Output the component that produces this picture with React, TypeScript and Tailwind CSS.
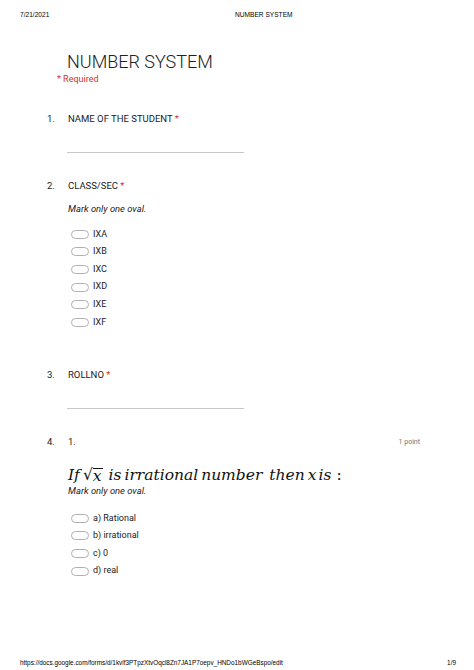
import React from "react";

const classOptions = ["IXA", "IXB", "IXC", "IXD", "IXE", "IXF"];
const answerOptions = ["a) Rational", "b) irrational", "c) 0", "d) real"];

const Star = () => <span className="text-[#d93025]"> *</span>;

const Oval = () => (
    <span className="inline-block w-[18px] h-[9px] rounded-full border border-[#b0b0b0] mr-[4px]" />
);

const OptionList = ({ items, className }: { items: string[]; className: string }) => (
    <div className={className}>
        {items.map((item) => (
            <div key={item} className="h-[17.6px] flex items-center pl-[71px] text-[9px] text-[#202124]">
                <Oval />
                <span>{item}</span>
            </div>
        ))}
    </div>
);

const Question = ({ num, children, className }: { num: string; children: React.ReactNode; className: string }) => (
    <div className={`h-[14px] flex items-center text-[9.5px] text-[#202124] ${className}`}>
        <span className="w-[68px] pl-[47px]">{num}</span>
        {children}
    </div>
);

const AnswerLine = ({ className }: { className: string }) => (
    <div className={`ml-[67px] w-[177px] h-px bg-[#c8c8c8] ${className}`} />
);

export default function App() {
    return (
        <div className="w-[474px] h-[670px] flex flex-col bg-white font-['Roboto',sans-serif] overflow-hidden">
            {/* print header */}
            <div className="h-[30px] flex items-center text-[6.6px] text-black font-['Liberation_Sans',sans-serif]">
                <span className="w-[235px] pl-[20px]">7/21/2021</span>
                <span>NUMBER SYSTEM</span>
            </div>

            <div className="mt-[20px] h-[22px] flex items-center pl-[67px] text-[18px] font-light text-[#202124]">
                NUMBER SYSTEM
            </div>
            <div className="mt-[2px] h-[12px] flex items-center pl-[57px] text-[9px] text-[#d93025]">
                * Required
            </div>

            <Question num="1." className="mt-[26px]">
                <span>NAME OF THE STUDENT<Star /></span>
            </Question>
            <AnswerLine className="mt-[26px]" />

            <Question num="2." className="mt-[26px]">
                <span>CLASS/SEC<Star /></span>
            </Question>
            <div className="mt-[9px] h-[14px] flex items-center pl-[68px] text-[9.4px] italic text-[#202124]">
                Mark only one oval.
            </div>
            <OptionList items={classOptions} className="mt-[9.5px]" />

            <Question num="3." className="mt-[37px]">
                <span>ROLLNO<Star /></span>
            </Question>
            <AnswerLine className="mt-[26px]" />

            <Question num="4." className="mt-[26px]">
                <span className="flex-1">1.</span>
                <span className="pr-[54px] text-[7px] text-[#70757a]">1 point</span>
            </Question>

            <div className="mt-[18px] h-[18px] flex items-center pl-[68px] text-[15.5px] italic text-[#111] font-['DejaVu_Serif',serif]">
                <span>If</span>
                <span className="ml-[3px] not-italic">√</span>
                <span className="border-t border-[#111] leading-[15px] pr-[1px]">x</span>
                <span className="ml-[6px]">is</span>
                <span className="ml-[3px]">irrational</span>
                <span className="ml-[3px]">number</span>
                <span className="ml-[7px]">then</span>
                <span className="ml-[3px]">x</span>
                <span className="ml-[2px]">is</span>
                <span className="ml-[5px] not-italic">:</span>
            </div>
            <div className="h-[12px] flex items-center pl-[68px] text-[9.4px] italic text-[#202124]">
                Mark only one oval.
            </div>
            <OptionList items={answerOptions} className="mt-[12.5px]" />

            {/* print footer */}
            <div className="mt-auto h-[14px] flex items-center justify-between pl-[20px] pr-[18px] text-[6.4px] text-black font-['Liberation_Sans',sans-serif]">
                <span>https://docs.google.com/forms/d/1kvlf3PTpzXtvOqcl8Zn7JA1P7oepv_HNDo1bWGeBspo/edit</span>
                <span>1/9</span>
            </div>
        </div>
    );
}
